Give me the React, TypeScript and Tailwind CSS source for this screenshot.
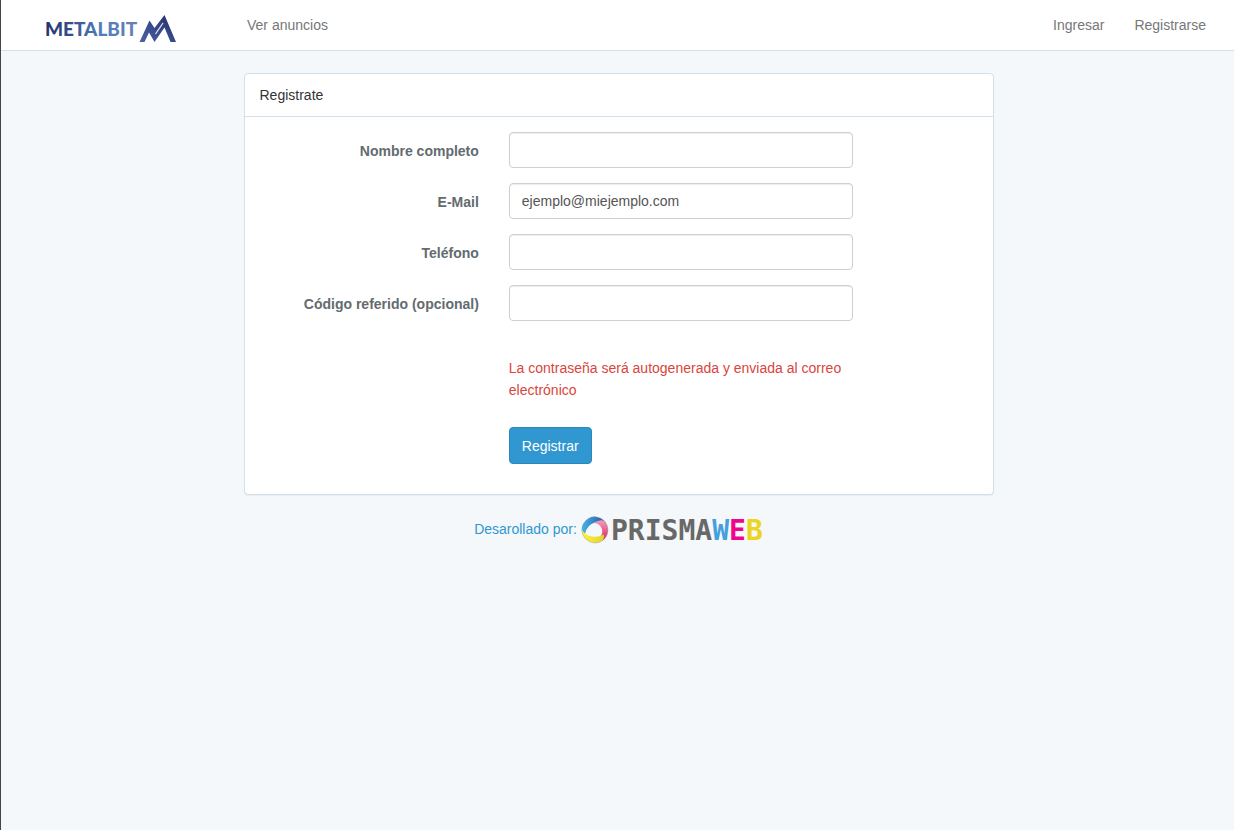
import type { InputHTMLAttributes } from "react";

function MetalbitLogo() {
  return (
    <svg viewBox="0 0 132 30" className="h-[30px] w-[132px]" role="img" aria-label="Metalbit">
      <defs>
        <linearGradient id="word" x1="0" x2="1" y1="0" y2="0">
          <stop offset="0" stopColor="#28306c" />
          <stop offset="0.3" stopColor="#37528f" />
          <stop offset="0.6" stopColor="#4f7dbd" />
          <stop offset="1" stopColor="#6a7fb4" />
        </linearGradient>
        <linearGradient id="mark" x1="0" x2="1" y1="1" y2="0">
          <stop offset="0" stopColor="#4f62a0" />
          <stop offset="0.5" stopColor="#354a8a" />
          <stop offset="1" stopColor="#262c5c" />
        </linearGradient>
      </defs>
      <text x="0" y="22" fontFamily="Lato, 'Liberation Sans', sans-serif" fontSize="19" fontWeight="900" fill="url(#word)">
        METALBIT
      </text>
      <path
        d="M94.500 28 L104.500 6.500 L109.500 14 L119.500 1 L131 28 H125.500 L119.500 13.500 L109.500 28 L104 18.500 L99.500 28 Z"
        fill="url(#mark)"
      />
      <path d="M110.500 20 L118 9" stroke="#e4e7f1" strokeWidth="1.300" />
    </svg>
  );
}

function PrismawebLogo() {
  return (
    <svg viewBox="0 0 184 36" className="h-9 w-[184px]" role="img" aria-label="Prismaweb">
      <defs>
        <linearGradient id="blue" x1="0" x2="1" y1="0" y2="0">
          <stop offset="0" stopColor="#45b4ea" />
          <stop offset="1" stopColor="#20569e" />
        </linearGradient>
        <linearGradient id="pink" x1="0" x2="0" y1="0" y2="1">
          <stop offset="0" stopColor="#f59abb" />
          <stop offset="1" stopColor="#d9265f" />
        </linearGradient>
        <linearGradient id="yellow" x1="0" x2="1" y1="0" y2="0">
          <stop offset="0" stopColor="#f8f53c" />
          <stop offset="1" stopColor="#e6d22e" />
        </linearGradient>
      </defs>
      <g transform="translate(0 5)">
        <path d="M1 16 A13 13 0 0 1 23.500 5 Q26 8 25 10 Q20 5 14 6.500 Q6 8.500 4 18 Q1.500 18 1 16 Z" fill="url(#blue)" />
        <path d="M12.500 7 Q19 3 23.500 5 A13 13 0 0 1 21.500 24.500 Q19 24 18.500 21.500 Q23 17 20.500 12 Q18 7 12.500 7 Z" fill="url(#pink)" />
        <path d="M1 13.500 Q4 19.500 11 20.500 Q17 21.500 22.500 18.500 Q24 21 21.500 24.500 A13 13 0 0 1 1 13.500 Z" fill="url(#yellow)" />
        <circle cx="14" cy="14" r="13" fill="none" stroke="#8b9399" strokeWidth="0.400" />
      </g>
      <text x="30" y="29" fontFamily="'DejaVu Sans Mono', monospace" fontSize="28" fontWeight="700" fill="#686868">
        PRISMA<tspan fill="#45a0dc">W</tspan><tspan fill="#f0048c">E</tspan><tspan fill="#ecd51e">B</tspan>
      </text>
    </svg>
  );
}

type FieldProps = InputHTMLAttributes<HTMLInputElement> & { id: string; label: string };

function Field({ id, label, ...rest }: FieldProps) {
  return (
    <div className="grid grid-cols-1 md:grid-cols-12 md:gap-x-[30px]">
      <label htmlFor={id} className="pt-2 font-bold md:col-span-4 md:text-right">
        {label}
      </label>
      <input
        id={id}
        name={id}
        className="h-9 w-full rounded-[4px] border border-[#ccd0d2] bg-white px-3 text-sm text-[#555555] shadow-[inset_0_1px_1px_rgba(0,0,0,0.075)] outline-none focus:border-[#98cbe8] md:col-span-6"
        {...rest}
      />
    </div>
  );
}

export default function App() {
  return (
    <div className="min-h-screen border-l border-[#444444] bg-[#f5f8fa] font-['Liberation_Sans',Arial,sans-serif] text-sm leading-[22px] text-[#636b6f]">
      <nav className="flex min-h-[51px] items-center border-b border-[#d3e0e9] bg-white pr-7 pl-11 text-[#777777]">
        <a href="#inicio" className="mt-2">
          <MetalbitLogo />
        </a>
        <a href="#anuncios" className="ml-[70px]">
          Ver anuncios
        </a>
        <div className="ml-auto flex gap-[30px]">
          <a href="#ingresar">Ingresar</a>
          <a href="#registrarse">Registrarse</a>
        </div>
      </nav>

      <main className="mx-auto mt-[22px] max-w-[752px] pl-[2px]">
        <section className="rounded-[4px] border border-[#d3e0e9] bg-white shadow-[0_1px_1px_rgba(0,0,0,0.05)]">
          <h1 className="border-b border-[#d3e0e9] px-[15px] py-[10px] text-[#333333]">Registrate</h1>
          <form className="flex flex-col gap-[15px] p-[15px]" onSubmit={(event) => event.preventDefault()}>
            <Field id="nombre" label="Nombre completo" type="text" />
            <Field id="email" label="E-Mail" type="email" defaultValue="ejemplo@miejemplo.com" />
            <Field id="telefono" label="Teléfono" type="tel" />
            <Field id="codigo" label="Código referido (opcional)" type="text" />
            <div className="grid grid-cols-1 pt-[21px] pb-[15px] md:grid-cols-12 md:gap-x-[30px]">
              <div className="md:col-span-6 md:col-start-5">
                <p className="text-[#d9453c]">La contraseña será autogenerada y enviada al correo electrónico</p>
                <button
                  type="submit"
                  className="mt-[26px] h-[37px] rounded-[4px] border border-[#2a88bd] bg-[#3097d1] px-3 text-white"
                >
                  Registrar
                </button>
              </div>
            </div>
          </form>
        </section>
      </main>

      <footer className="mt-4 flex justify-center pl-1">
        <a href="#prismaweb" className="flex items-center gap-1 text-[#3097d1]">
          Desarollado por:
          <PrismawebLogo />
        </a>
      </footer>
    </div>
  );
}
